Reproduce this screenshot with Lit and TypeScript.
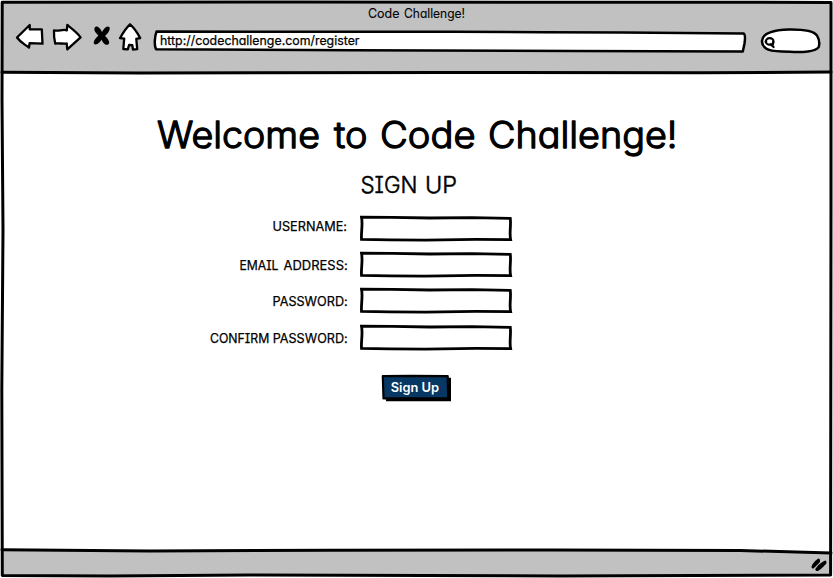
import { LitElement, html, svg, css } from "lit";
import { customElement, property } from "lit/decorators.js";

type Word = [text: string, x: number, width: number];

/** One line of hand-lettered text; each word is fitted to its own width. */
@customElement("sketch-text")
class SketchText extends LitElement {
  @property({ attribute: false }) words: Word[] = [];
  @property({ type: Number }) width = 0;
  @property({ type: Number }) height = 0;
  @property({ type: Number }) baseline = 0;

  static styles = css`
    :host { display: block; flex: none; }
    svg { display: block; overflow: visible; }
    text {
      font-family: Inter, "Open Sans", sans-serif;
      font-size: inherit;
      font-weight: inherit;
      font-feature-settings: "cv11" 1, "cv08" 1, "calt" 0;
      fill: currentColor;
      stroke: currentColor;
      stroke-width: var(--pen, 0);
      stroke-linejoin: round;
      stroke-linecap: round;
    }
  `;

  render() {
    return html`<svg width=${this.width} height=${this.height}>
      ${this.words.map(([t, x, w]) => svg`<text x=${x} y=${this.baseline} textLength=${w} lengthAdjust="spacingAndGlyphs">${t}</text>`)}
    </svg>`;
  }
}

@customElement("sketch-field")
class SketchField extends LitElement {
  @property({ attribute: false }) words: Word[] = [];
  @property({ type: Number }) baseline = 15;

  static styles = css`
    :host { display: flex; height: 27px; }
    .label { font-size: 12.5px; font-weight: 400; width: 150px; --pen: 0.25px; }
    svg { display: block; flex: none; }
    .box { fill: #fff; stroke: #000; stroke-width: 2.8; stroke-linejoin: miter; }
  `;

  render() {
    return html`
      <sketch-text class="label" .words=${this.words} .width=${150} .height=${27} .baseline=${this.baseline}></sketch-text>
      <svg width="153" height="27">
        <path class="box" d="M1.5 2.2 L32 2.4 L70 3 L112 2.6 L150.3 3.4 C151.2 10 149.2 18 150.6 24.6 L116 24.4 L65 25.2 L30 24.8 L1.5 24.3 C1 17 3 9 1.5 2.2Z"></path>
      </svg>`;
  }
}

@customElement("app-root")
class AppRoot extends LitElement {
  static styles = css`
    :host {
      position: relative;
      display: flex;
      flex-direction: column;
      width: 833px;
      height: 578px;
      overflow: hidden;
      background: #fff;
      color: #000;
    }
    .bar { flex: none; background: #c1c1c1; }
    .top { height: 73px; }
    .caption { display: flex; justify-content: center; height: 23px; font-size: 12.8px; --pen: 0.1px; }
    .tools { display: flex; height: 34px; }
    .tools > svg { display: block; flex: none; }
    .ink { fill: #fff; stroke: #000; stroke-width: 2.3; stroke-linejoin: round; stroke-linecap: round; }
    .line { fill: none; stroke: #000; stroke-width: 3; stroke-linejoin: round; stroke-linecap: round; }
    .mark { fill: #000; }
    .address { display: grid; width: 607px; margin-left: 5px; font-size: 12.6px; }
    .address > * { grid-area: 1 / 1; }
    .address sketch-text { --pen: 0.25px; margin: 7px 0 0 12px; }
    main { flex: 1; }
    .title { font-size: 36.5px; font-weight: 300; margin: 38px 0 0 157px; --pen: 1.3px; }
    .subtitle { font-size: 22.5px; font-weight: 300; margin: 14px 0 0 361px; --pen: 0.5px; }
    form { display: grid; grid-template-rows: 36px 36px 36.6px 36.6px; margin: 15px 0 0 210px; }
    .submit {
      display: grid;
      margin: 14px 0 0 381px;
      padding: 0;
      border: 0;
      background: none;
      width: 72px;
      height: 29px;
      color: #fff;
    }
    .submit > * { grid-area: 1 / 1; display: block; }
    .submit sketch-text { font-size: 12.8px; font-weight: 600; }
    .face { fill: #073763; stroke: #000; stroke-width: 2.2; stroke-linejoin: round; }
    footer { height: 28px; display: flex; justify-content: flex-end; }
    .grip { display: block; margin-right: 5px; }
    .frame { position: absolute; inset: 0; pointer-events: none; }
    .clear { fill: #fff; }
    .fine { stroke-width: 2.5; }
    .lens { stroke-width: 2.2; }
  `;

  render() {
    return html`
      <div class="bar top">
        <div class="caption">
          <sketch-text .words=${[["Code", 0, 31.5], ["Challenge!", 36, 61]] as Word[]} .width=${97} .height=${23} .baseline=${18}></sketch-text>
        </div>
        <div class="tools">
          <svg width="148" height="34">
            <path class="ink" d="M17 14.5 L29.7 2 L29.8 6.4 L41.8 6.3 L42.5 20.7 L29.6 20.2 L29 24.7 C24.8 21.3 20.5 19.5 17 14.5Z"></path>
            <path class="ink" d="M54 7.3 C58 8.8 62.5 5.8 66.8 7.3 L67.3 2 C72 5.7 77 9.3 80.6 14.3 L67.3 26.4 L66.7 20.5 C63.5 21.2 59 19.8 55.2 20.5 C54.1 16 53.8 11.5 54 7.3Z"></path>
            <path class="mark" d="M94.7 4.4 C97 1.8 100.5 5.5 102 8.9 C103.9 5.4 107 1.7 109.5 4.2 C110.5 7 107.8 10.5 105 13 C108.2 15.8 110.7 19.8 108.2 21.5 C105.2 22.9 103 19.4 101.4 16.7 C99.7 19.8 96.6 22.5 94 20.9 C93 17.7 95.9 15.2 98.4 12.5 C95.6 9.7 93.5 7 94.7 4.4Z"></path>
            <path class="ink" d="M130 1.3 C133.8 4.5 137.3 9.5 140.2 15 L136.3 15.8 L137.2 26.2 L133 26.5 L132.3 22.2 L129.1 22 L127.8 26.4 L123.3 26 L124.2 15.6 L120 15.2 C122.8 10 126 5 130 1.3Z"></path>
          </svg>
          <div class="address">
            <svg width="607" height="34">
              <path class="ink fine" d="M3.5 8.6 L130 8.8 L300 8.7 L390 9.3 L470 9.5 L590.5 10.4 C592.3 11.2 592.3 15 591.5 20.5 L589.8 28.4 L420 28 L200 27.2 L3 26.2 C.8 22 2 12.5 3.5 8.6Z"></path>
            </svg>
            <sketch-text .words=${[["http://codechallenge.com/register", -5, 199.5]] as Word[]} .width=${210} .height=${20} .baseline=${15}></sketch-text>
          </div>
          <svg width="73" height="34">
            <path class="ink fine" d="M2.2 17 C3.5 9 15 7 29 6.6 C43 6.4 54 8.5 57 12.5 C59 16 60 20 58.7 24 C56 28.7 42 29.6 30 28.7 C20 28 11 29.2 6 25.5 C2.5 22.8 1.5 20 2.2 17Z"></path>
            <ellipse class="line lens" cx="9.7" cy="18.4" rx="3.8" ry="3.3"></ellipse>
            <path class="line lens" d="M6.2 18.6 L5.6 18.6 M10.6 21.4 L13.6 24 M13.2 19 L12.8 22"></path>
          </svg>
        </div>
      </div>

      <main>
        <sketch-text class="title" .words=${[["Welcome", 0, 163], ["to", 177, 33.5], ["Code", 223, 95.5], ["Challenge!", 331, 189.5]] as Word[]} .width=${520} .height=${50} .baseline=${36.5}></sketch-text>
        <sketch-text class="subtitle" .words=${[["SIGN", -0.5, 57], ["UP", 64, 32]] as Word[]} .width=${98} .height=${25} .baseline=${17.6}></sketch-text>
        <form>
          <sketch-field .words=${[["USERNAME:", 62.5, 74.5]] as Word[]} .baseline=${16}></sketch-field>
          <sketch-field .words=${[["EMAIL", 29.5, 39]  , ["ADDRESS:", 73.5, 64.2]] as Word[]} .baseline=${19}></sketch-field>
          <sketch-field .words=${[["PASSWORD:", 62.5, 75.2]] as Word[]} .baseline=${19}></sketch-field>
          <sketch-field .words=${[["CONFIRM", 0, 59.3], ["PASSWORD:", 62.7, 75]] as Word[]} .baseline=${19}></sketch-field>
        </form>
        <button class="submit" type="button">
          <svg width="72" height="29">
            <path class="mark" d="M5 4 L70 3.8 L70 27.2 L5 27.2Z"></path>
            <path class="face" d="M1.8 2.2 L30 1.8 L66.7 2.2 L67.2 24 L2.5 24.4Z"></path>
          </svg>
          <sketch-text .words=${[["Sign", 9.8, 27.5], ["Up", 40.5, 17.6]] as Word[]} .width=${72} .height=${29} .baseline=${17.8}></sketch-text>
        </button>
      </main>

      <footer class="bar">
        <svg class="grip" width="20" height="28">
          <path class="line" d="M5 17 C6 13.5 8 12 10.5 10.2 M8.8 19.5 C11 15 14 14.3 17 12.2 M6 16 L10.5 11.5 M9.5 19.5 C12 18.5 14.5 15 17 12.8"></path>
        </svg>
      </footer>

      <svg class="frame" width="833" height="578">
        <path class="clear" d="M0 0 H833 V578 H0Z M2 2 V576 H831 V2Z" fill-rule="evenodd"></path>
        <path class="clear" d="M640 548 L740 550 L831 552.5 V547 H640Z"></path>
        <path class="line" d="M2.2 2.2 L300 2 L831 2.4 L831 200 L830.6 575 L560 576 L250 575 L110 576 L2.3 575.5 L1.8 390 L3 230 L2 100Z"></path>
        <path class="line" d="M2 72.3 L140 73 L450 72.5 L700 72.8 L831 72"></path>
        <path class="line" d="M2 549.8 L150 551 L330 550.2 L550 550 L740 550.5 L831 553"></path>
      </svg>
    `;
  }
}
